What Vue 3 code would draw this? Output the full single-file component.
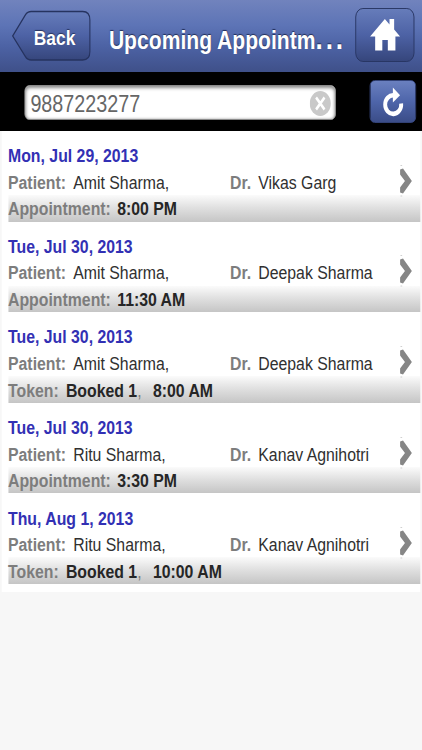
<template>
    <div class="screen">
        <header class="header">
            <button class="back-button">
                <svg class="back-shape" width="94" height="52" viewBox="0 0 94 52">
                    <defs>
                        <linearGradient id="back-fill" x1="0" y1="0" x2="0" y2="1">
                            <stop offset="0" stop-color="#667cba" />
                            <stop offset="0.5" stop-color="#4d62a5" />
                            <stop offset="1" stop-color="#36467c" />
                        </linearGradient>
                    </defs>
                    <path d="M1 26 L16 5 Q18.500 1.500 23 1.500 H84 Q92.500 1.500 92.500 10 V41.500 Q92.500 50 84 50 H23 Q18.500 50 16 46.500 Z" fill="url(#back-fill)" stroke="#26335f" stroke-width="1.3" />
                </svg>
                <span class="back-label">Back</span>
            </button>
            <h1 class="title">Upcoming Appointm<span class="dots">...</span></h1>
            <button class="home-button" aria-label="Home">
                <svg width="36" height="33" viewBox="0 0 36 33">
                    <path d="M18 1 L23.500 6.500 V1 H29 V11.500 L36 18.500 H30.500 V32.500 H21.500 V22 H15 V32.500 H6.500 V18.500 H0.500 Z" fill="#fff" />
                </svg>
            </button>
        </header>

        <div class="search-bar">
            <div class="search-field">
                <input v-model="phone" type="text">
                <svg class="clear" width="25" height="25" viewBox="0 0 25 25" @click="phone = ''">
                    <circle cx="12.500" cy="12.500" r="12.500" fill="#c9c9c9" />
                    <path d="M7.500 6.500 L17.500 18.500 M17.500 6.500 L7.500 18.500" stroke="#fff" stroke-width="2.800" />
                </svg>
            </div>
            <button class="refresh-button" aria-label="Refresh">
                <svg width="26" height="30" viewBox="0 0 26 30">
                    <path d="M22.300 16.500 A9.500 9.300 0 1 1 13.500 8.300" fill="none" stroke="#fff" stroke-width="4.600" />
                    <path d="M12.500 0.500 L21 8.300 L12.500 15.500 Z" fill="#fff" />
                </svg>
            </button>
        </div>

        <ul class="list">
            <li v-for="(item, index) in appointments" :key="index" class="item">
                <div class="line date">{{ item.date }}</div>
                <div class="line people">
                    <div class="patient">
                        <b>Patient:</b><span class="name">{{ item.patient }},</span>
                    </div>
                    <div class="doctor">
                        <b>Dr.</b><span class="name">{{ item.doctor }}</span>
                    </div>
                    <svg class="chevron" width="15" height="32" viewBox="0 0 15 32">
                        <path d="M0 4.500 L3.500 3.500 L14 16 L3.500 28.500 L0 27.500 V22.500 L5.800 16 L0 9.500 Z" fill="#868686" />
                        <path d="M0.500 0.500 h2 M0.500 31 h2" stroke="#ccc" />
                    </svg>
                </div>
                <div class="line slot">
                    <b>{{ item.token ? 'Token:' : 'Appointment:' }}</b>
                    <span v-if="item.token" class="token"><strong>{{ item.token }}</strong>,</span>
                    <strong class="time">{{ item.time }}</strong>
                </div>
            </li>
        </ul>
    </div>
</template>

<script setup>
import { ref } from 'vue';

const phone = ref('9887223277')

const appointments = [
    { date: 'Mon, Jul 29, 2013', patient: 'Amit Sharma', doctor: 'Vikas Garg', time: '8:00 PM' },
    { date: 'Tue, Jul 30, 2013', patient: 'Amit Sharma', doctor: 'Deepak Sharma', time: '11:30 AM' },
    { date: 'Tue, Jul 30, 2013', patient: 'Amit Sharma', doctor: 'Deepak Sharma', token: 'Booked 1', time: '8:00 AM' },
    { date: 'Tue, Jul 30, 2013', patient: 'Ritu Sharma', doctor: 'Kanav Agnihotri', time: '3:30 PM' },
    { date: 'Thu, Aug 1, 2013', patient: 'Ritu Sharma', doctor: 'Kanav Agnihotri', token: 'Booked 1', time: '10:00 AM' },
]
</script>

<style>
body {
    background: #f7f7f7;
    overflow: hidden;
}
</style>

<style scoped>
/* 500px wide layout squeezed to the width of the viewport */
.screen {
    width: 500px;
    height: 750px;
    transform: scaleX(0.844);
    transform-origin: 0 0;
    background: #f7f7f7;
    font-family: "Liberation Sans", Arial, sans-serif;
    font-size: 18.75px;
}

button {
    border: none;
    padding: 0;
    font-family: inherit;
    color: #fff;
}

.header {
    display: flex;
    align-items: flex-start;
    box-sizing: border-box;
    height: 72px;
    padding: 8px 9px 0 14px;
    background: linear-gradient(#7183bd 0, #5d74b6 35%, #4c62a4 65%, #3f5089 100%);
}

.back-button {
    display: grid;
    width: 94px;
    height: 52px;
    margin-top: 2px;
    background: none;
}

.back-shape,
.back-label {
    grid-area: 1 / 1;
}

.back-label {
    padding: 16px 0 0 26px;
    font-size: 20.6px;
    font-weight: bold;
    line-height: 23px;
    text-align: left;
    text-shadow: 0 -1px 1px #26335f;
}

.title {
    flex: 1;
    margin: 0 0 0 21px;
    padding-top: 18px;
    font-size: 25px;
    line-height: 28px;
    white-space: nowrap;
    color: #fff;
    text-shadow: 0 -1px 1px #222e58;
}

.dots {
    font-size: 31px;
    line-height: 20px;
    letter-spacing: 3.4px;
}

.home-button {
    display: flex;
    align-items: center;
    justify-content: center;
    width: 70px;
    height: 54px;
    border: 1.3px solid #26335f;
    border-radius: 9px;
    background: linear-gradient(#667cba, #4d62a5 50%, #36467c);
}

.home-button svg {
    margin: -1px 1px 0 0;
}

.search-bar {
    display: flex;
    align-items: flex-start;
    justify-content: space-between;
    box-sizing: border-box;
    height: 59px;
    padding: 8px 7px 0 29px;
    background: #000;
}

.search-field {
    display: flex;
    align-items: center;
    box-sizing: border-box;
    width: 369px;
    height: 35px;
    margin-top: 5px;
    padding: 0 5px 0 6px;
    border: 1px solid #8b8b8b;
    border-radius: 6px;
    background: #fff;
    box-shadow: inset 0 2px 4px #8f8f8f, inset 0 0 3px #aaa;
}

.search-field input {
    flex: 1;
    min-width: 0;
    height: 30px;
    padding: 3px 0 0;
    border: none;
    outline: none;
    background: none;
    font-family: inherit;
    font-size: 23.4px;
    color: #666;
}

.clear {
    margin-top: 2px;
}

.refresh-button {
    display: flex;
    align-items: center;
    justify-content: center;
    width: 55px;
    height: 43px;
    border: 1px solid #36477f;
    border-radius: 6px;
    background: linear-gradient(#6a80bf, #4e65aa 50%, #3b4d88);
}

.list {
    margin: 0 2px;
    padding: 0 0 8px 7.5px;
    list-style: none;
    background: #fff;
}

.item {
    padding-top: 10.8px;
}

.line {
    box-sizing: border-box;
    height: 26.6px;
    padding-top: 1.5px;
    line-height: 26.6px;
    white-space: nowrap;
    color: #7d7d7d;
}

.date {
    font-weight: bold;
    color: #3230b4;
}

.people {
    display: flex;
}

.patient {
    width: 263px;
}

.doctor {
    flex: 1;
}

.name {
    margin-left: 8.5px;
    color: #303030;
}

.chevron {
    margin: -5px 9px 0 0;
}

.slot {
    display: flex;
    background: linear-gradient(#fbfbfb, #e1e1e1 45%, #c5c5c5);
}

.slot strong {
    color: #262626;
}

.time {
    margin-left: 7.5px;
}

.token {
    margin-left: 8.5px;
}

.token + .time {
    margin-left: 13.5px;
}
</style>
